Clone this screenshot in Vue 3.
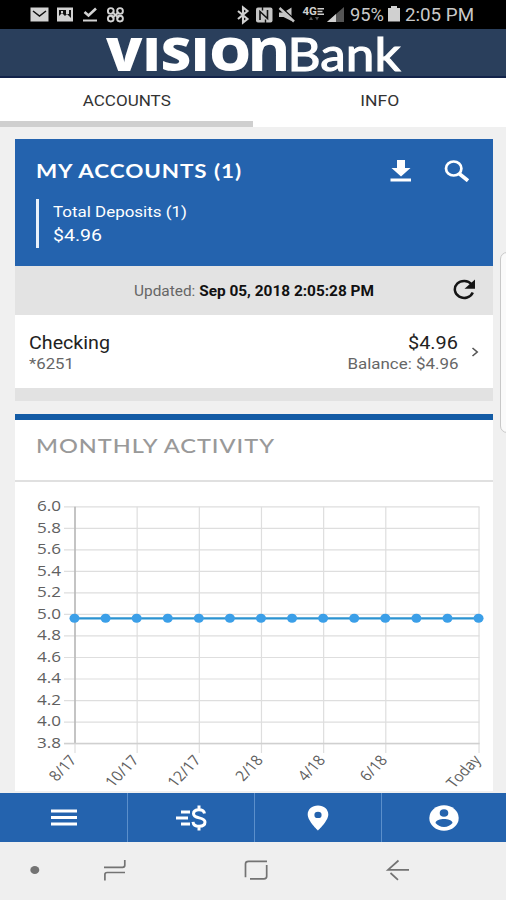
<script setup>
// Scales a label horizontally so that it takes the given width in pixels.
const vFit = {
  mounted(el, { value }) {
    el.style.transform = `scaleX(${value / el.getBoundingClientRect().width})`
  },
}

const gridTop = 506.8
const gridBottom = 743.6
const yTicks = Array.from({ length: 12 }, (_, i) => ({
  label: (6 - i * 0.2).toFixed(1),
  y: gridTop + (i * (gridBottom - gridTop)) / 11 - 482,
}))
const left = 75
const step = 31.08
const xTicks = [
  { i: 0, label: '8/17', w: 28 },
  { i: 2, label: '10/17', w: 36 },
  { i: 4, label: '12/17', w: 36 },
  { i: 6, label: '2/18', w: 28 },
  { i: 8, label: '4/18', w: 28 },
  { i: 10, label: '6/18', w: 28 },
  { i: 13, label: 'Today', w: 37 },
].map((t) => ({ ...t, x: left + t.i * step - 15 }))
const points = Array.from({ length: 14 }, (_, i) => left - 0.5 + i * step - 15)
</script>

<template>
  <div class="screen">
    <div class="status">
      <svg class="status-left" width="96" height="18" viewBox="30 6 96 18">
        <rect x="30.5" y="7.5" width="18" height="14" fill="#d2d2d2" />
        <path d="M33 11l6.5 5 6.5-5" fill="none" stroke="#111" stroke-width="1.5" />
        <rect x="57" y="7.5" width="16" height="14" fill="#d2d2d2" />
        <path d="M59 10h12v9H59z" fill="#111" />
        <path d="M59 19v-3l3-3 3 3 2-2 4 4v1zM61 11h2v2h-2zM66 10h3v4h-3z" fill="#d2d2d2" />
        <path d="M84.500 12l4 3.500 7.500-7" fill="none" stroke="#d2d2d2" stroke-width="2.600" />
        <path d="M83 20.500h14" stroke="#d2d2d2" stroke-width="2" />
        <g fill="none" stroke="#d2d2d2" stroke-width="1.900">
          <circle cx="110.800" cy="11" r="2.900" />
          <circle cx="120" cy="11" r="2.900" />
          <circle cx="110.800" cy="18.600" r="2.900" />
          <circle cx="120" cy="18.600" r="2.900" />
          <path d="M112 12l7 6M119 12l-7 6" />
        </g>
      </svg>
      <svg class="status-right" width="110" height="20" viewBox="236 5 110 20">
        <path d="M238 11l9.500 8-4.500 3.500v-15l4.500 3.500-9.500 8" fill="none" stroke="#cfcfcf" stroke-width="2.100" />
        <rect x="256" y="7.500" width="16.500" height="15" rx="2" fill="#c4c4c4" />
        <path d="M260 20v-8.500l7.500 7V10" fill="none" stroke="#111" stroke-width="1.600" />
        <path d="M262.500 7v3.500M265.500 19.500V23" stroke="#111" stroke-width="1.400" />
        <path d="M279 12.500h4.500l8-5v13.500l-8-4h-4.500z" fill="#c4c4c4" />
        <path d="M281.500 7.500l14 13" stroke="#000" stroke-width="1.600" />
        <path d="M279.500 8l14.500 13.500" stroke="#c4c4c4" stroke-width="2.400" />
        <text x="302.500" y="14.800" class="network" textLength="14.500" lengthAdjust="spacingAndGlyphs">4G</text>
        <path d="M317.500 8.700h6.500M317.500 11.500h5M317.500 14.200h6.500" stroke="#cfcfcf" stroke-width="1.400" />
        <path d="M309 20l2-3.500 2 3.500zM315 17h4l-2 3.500z" fill="#555" />
        <path d="M344 7v15h-17z" fill="#555" />
        <path d="M336 14v8h-9z" fill="#d0d0d0" />
      </svg>
      <span v-fit="34" class="percent">95%</span>
      <svg class="battery" width="12" height="17" viewBox="0 0 12 17">
        <path d="M3 0h6v2h3v13.500H0V2h3z" fill="#d0d0d0" />
      </svg>
      <span v-fit="69" class="clock">2:05 PM</span>
    </div>

    <header class="brand">
      <svg width="506" height="48" viewBox="0 29 506 48">
        <text class="vision" x="106" y="70.500" textLength="145" lengthAdjust="spacingAndGlyphs">VISIO</text>
        <text class="vision-n" x="247" y="70.500" textLength="44" lengthAdjust="spacingAndGlyphs">n</text>
        <text class="bank" x="287.500" y="70.500" textLength="113" lengthAdjust="spacingAndGlyphs">Bank</text>
      </svg>
    </header>

    <nav class="tabs">
      <div class="tab active"><span v-fit="88">ACCOUNTS</span></div>
      <div class="tab"><span v-fit="39">INFO</span></div>
    </nav>

    <main class="content">
      <section class="accounts">
        <div class="summary">
          <div class="summary-head">
            <h1 v-fit="206">MY ACCOUNTS (1)</h1>
            <svg class="download" width="22" height="22" viewBox="0 0 22 22">
              <path d="M7 0h8v8h5.500L11 16.500 1.500 8H7z M.5 18.500h20.500v3H.5z" fill="#fff" />
            </svg>
            <svg class="search" width="26" height="22" viewBox="0 0 26 22">
              <ellipse cx="9.700" cy="8.500" rx="7.700" ry="7" fill="none" stroke="#fff" stroke-width="2.700" />
              <path d="M15 13.500l9 7.200" stroke="#fff" stroke-width="3.700" />
            </svg>
          </div>
          <div class="deposits">
            <span v-fit="134" class="dep-label">Total Deposits (1)</span>
            <span v-fit="49" class="dep-value">$4.96</span>
          </div>
        </div>
        <div class="updated">
          <span v-fit="240" class="updated-text">Updated: <b>Sep 05, 2018 2:05:28 PM</b></span>
          <svg class="refresh" width="24" height="21" viewBox="0 0 24 21">
            <path d="M19.500 5.200A9.300 8.500 0 1 0 20.800 13.500" fill="none" stroke="#151515" stroke-width="2.500" />
            <path d="M23 .5v9.200H12.500z" fill="#151515" />
          </svg>
        </div>
        <div class="account">
          <div class="col">
            <span v-fit="81" class="main-text">Checking</span>
            <span v-fit="45" class="sub-text">*6251</span>
          </div>
          <div class="col amounts">
            <span v-fit="50" class="main-text">$4.96</span>
            <span v-fit="111" class="sub-text">Balance: $4.96</span>
          </div>
          <svg class="chevron" width="8" height="10" viewBox="0 0 8 10">
            <path d="M1.500 1L6.200 5 1.500 9" fill="none" stroke="#555" stroke-width="1.600" />
          </svg>
        </div>
      </section>

      <section class="activity">
        <h2><span v-fit="239">MONTHLY ACTIVITY</span></h2>
        <svg class="chart" width="478" height="311" viewBox="0 0 478 311">
          <g class="grid">
            <line v-for="t in yTicks" :key="t.label" x1="49" x2="464.500" :y1="t.y" :y2="t.y" />
            <line v-for="t in xTicks" :key="t.label" :x1="t.x" :x2="t.x" y1="24.800" y2="271" />
          </g>
          <path d="M60 24.800V262" class="axis" />
          <path d="M49 261.600H464.500" class="base" />
          <text
            v-for="t in yTicks"
            :key="t.label"
            class="tick"
            x="22"
            :y="t.y + 4.400"
            textLength="24"
            lengthAdjust="spacingAndGlyphs"
          >{{ t.label }}</text>
          <text
            v-for="t in xTicks"
            :key="t.label"
            class="tick"
            text-anchor="end"
            :transform="`translate(${t.x + 2.5} 278.500) scale(1.15 1) rotate(-50)`"
            :textLength="t.w"
            lengthAdjust="spacingAndGlyphs"
          >{{ t.label }}</text>
          <path d="M59.500 136.400H463.500" class="series" />
          <ellipse v-for="x in points" :key="x" :cx="x" cy="136.300" rx="5" ry="4.500" fill="#3b9fe8" />
        </svg>
      </section>
      <div class="edge-handle"></div>
    </main>

    <nav class="app-nav">
      <div class="item">
        <svg width="26" height="17" viewBox="0 0 26 17">
          <path d="M0 2h26M0 8.500h26M0 15h26" stroke="#fff" stroke-width="2.800" />
        </svg>
      </div>
      <div class="item">
        <svg width="32" height="26" viewBox="0 0 32 26">
          <path d="M6 7h9M1 13h12M6 19h9" stroke="#fff" stroke-width="2.800" />
          <path
            d="M29.500 8.500C29 5.800 27 4.800 24 4.800c-3.300 0-5.500 1.500-5.500 4 0 5.700 11.500 2.400 11.500 8.200 0 2.800-2.500 4.300-5.800 4.300-3.500 0-5.900-1.500-6.200-4.500M24 .5V5M24 21v4.500"
            fill="none"
            stroke="#fff"
            stroke-width="3"
          />
        </svg>
      </div>
      <div class="item">
        <svg width="22" height="26" viewBox="0 0 22 26">
          <path
            d="M11 .5C5 .5.7 4.300.7 9.500.7 16 11 25.500 11 25.500S21.300 16 21.300 9.500C21.300 4.300 17 .5 11 .5zm0 6.200a3.600 3.200 0 1 1 0 6.400 3.600 3.200 0 0 1 0-6.400z"
            fill="#fff"
            fill-rule="evenodd"
          />
        </svg>
      </div>
      <div class="item">
        <svg width="30" height="26" viewBox="0 0 30 26">
          <ellipse cx="15" cy="13" rx="14.700" ry="12.800" fill="#fff" />
          <ellipse cx="15" cy="8" rx="4.300" ry="3.800" fill="#2463ae" />
          <path d="M6.500 18c0-2.600 5-4 8.500-4s8.500 1.400 8.500 4c-1.800 2.400-4.800 3.900-8.500 3.900S8.300 20.400 6.500 18z" fill="#2463ae" />
        </svg>
      </div>
    </nav>

    <div class="system-nav">
      <svg width="506" height="58" viewBox="0 842 506 58" fill="none" stroke="#737373" stroke-width="1.700">
        <ellipse cx="34.800" cy="870" rx="4.500" ry="4" fill="#737373" stroke="none" />
        <path d="M104 867.300h18.500q2.300 0 2.300-2V860M125 872.500h-17.800q-2.300 0-2.300 2v6" />
        <path d="M267 861.300h-18.500q-3 0-3 2.500v13.500M250 878.800h14q2.700 0 2.700-2.500V865" />
        <path d="M409 869.800h-21l10.500-9.300M390.500 873l7.500 6.800" />
      </svg>
    </div>
  </div>
</template>

<style>
body {
  margin: 0;
}
</style>

<style scoped>
.screen {
  width: 506px;
  height: 900px;
  display: flex;
  flex-direction: column;
  overflow: hidden;
  background: #f0f0f0;
  font-family: Roboto, 'Liberation Sans', sans-serif;
  color: #333;
}
svg {
  display: block;
  flex: none;
}
span,
h1 {
  display: inline-block;
  white-space: nowrap;
  transform-origin: left center;
}
.status {
  height: 29px;
  flex: none;
  box-sizing: border-box;
  padding-left: 30px;
  display: flex;
  align-items: center;
  background: #000;
  color: #c9c9c9;
  font-size: 18px;
}
.status-right {
  margin-left: 110px;
}
.network {
  font: 700 10px Roboto, sans-serif;
  fill: #cfcfcf;
}
.percent {
  margin-left: 3.500px;
}
.percent,
.clock {
  line-height: 20px;
  padding-top: 1px;
}
.battery {
  margin-left: 5.500px;
}
.clock {
  margin-left: 5px;
}
.brand {
  height: 49px;
  flex: none;
  box-sizing: border-box;
  background: #2a3f5c;
  border-bottom: 2px solid #12234a;
}
.brand svg {
  overflow: visible;
}
.vision,
.vision-n,
.bank {
  fill: #fff;
}
.vision {
  font: 800 46px 'Open Sans', sans-serif;
}
.vision-n {
  font: 700 60px 'Open Sans', sans-serif;
}
.bank {
  font: 400 46px Lato, sans-serif;
  stroke: #fff;
  stroke-width: 1.100px;
}
.tabs {
  height: 49px;
  flex: none;
  display: flex;
  background: #fff;
}
.tab {
  flex: 1;
  box-sizing: border-box;
  height: 49px;
  padding-top: 14px;
  text-align: center;
  font-size: 15px;
  line-height: 18px;
}
.tab span {
  transform-origin: center;
}
.tab.active {
  border-bottom: 6px solid #cfcfcf;
}
.content {
  position: relative;
  height: 666px;
  flex: none;
  box-sizing: border-box;
  padding: 12px 13px 0 15px;
}
.accounts {
  border-bottom: 13px solid #e2e2e2;
}
.summary {
  height: 127px;
  box-sizing: border-box;
  padding: 20px 23.500px 0 21px;
  background: #2463ae;
  color: #fff;
}
.summary-head {
  display: flex;
  align-items: center;
  height: 24px;
}
h1 {
  margin: 0 0 1px;
  font: 700 19.500px Lato, sans-serif;
  letter-spacing: 0.8px;
}
.download {
  margin-left: auto;
}
.search {
  margin-left: 32px;
}
.deposits {
  height: 49px;
  margin-top: 16px;
  box-sizing: border-box;
  border-left: 3px solid #e9f1fa;
  padding: 3px 0 0 14px;
  display: flex;
  flex-direction: column;
  align-items: flex-start;
}
.dep-label {
  font-size: 15px;
  line-height: 20px;
}
.dep-value {
  font-size: 17px;
  line-height: 27px;
}
.updated {
  height: 49px;
  box-sizing: border-box;
  padding: 0 17px 2px 119px;
  display: flex;
  align-items: center;
  justify-content: space-between;
  background: #e3e3e3;
}
.updated-text {
  font-size: 14px;
  color: #666;
  line-height: 20px;
  padding-top: 2px;
}
.updated b {
  color: #111;
}
.account {
  height: 73px;
  box-sizing: border-box;
  padding: 17px 14px 0 14px;
  display: flex;
  background: #fff;
}
.col {
  display: flex;
  flex-direction: column;
  align-items: flex-start;
}
.amounts {
  margin-left: auto;
  align-items: flex-end;
}
.amounts span {
  transform-origin: right center;
}
.main-text {
  font-size: 17.500px;
  line-height: 23px;
  color: #222;
}
.sub-text {
  font-size: 15px;
  line-height: 18px;
  color: #666;
}
.chevron {
  margin: 15px 0 0 13px;
}
.activity {
  margin-top: 13px;
  border-top: 6px solid #135ba5;
  height: 371px;
  background: #fff;
}
h2 {
  margin: 0;
  height: 62px;
  box-sizing: border-box;
  padding: 13px 0 0 21px;
  border-bottom: 2px solid #e0e0e0;
  font: 500 19.500px/25px Lato, sans-serif;
  letter-spacing: 0.8px;
  color: #999;
}
.grid line {
  stroke: #dedede;
  stroke-width: 1.200;
}
.axis {
  stroke: #aaa;
  stroke-width: 1.200;
}
.base {
  stroke: #d0d0d0;
  stroke-width: 1.500;
}
.tick {
  font: 14.500px 'Open Sans', sans-serif;
  fill: #606060;
}
.series {
  stroke: #2b93d1;
  stroke-width: 2.200;
}
.edge-handle {
  position: absolute;
  right: -8px;
  top: 125px;
  width: 12px;
  height: 179px;
  border: 1.500px solid #c8c8c8;
  border-radius: 7px;
  background: #fafafa;
}
.app-nav {
  height: 49px;
  flex: none;
  display: grid;
  grid-template-columns: 128px 127px 127px 124px;
  background: #2463ae;
}
.item {
  display: flex;
  align-items: center;
  justify-content: center;
  border-right: 1px solid #5b8fcb;
}
.item:last-child {
  border-right: 0;
}
.system-nav {
  height: 58px;
  flex: none;
  background: #efefef;
}
</style>
